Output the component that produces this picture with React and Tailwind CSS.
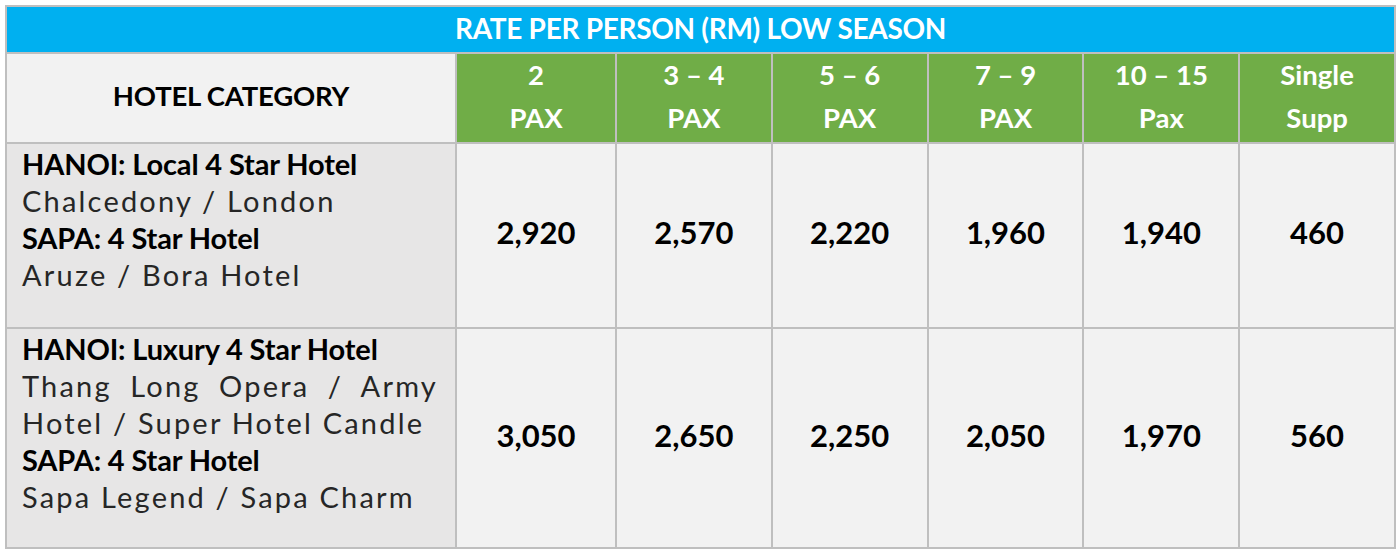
const cols = [
  ["2", "PAX"],
  ["3 – 4", "PAX"],
  ["5 – 6", "PAX"],
  ["7 – 9", "PAX"],
  ["10 – 15", "Pax"],
  ["Single", "Supp"],
];

const rows = [
  {
    h: "h-[183px]",
    lines: [
      { b: true, t: "HANOI: Local 4 Star Hotel" },
      { t: "Chalcedony / London" },
      { b: true, t: "SAPA: 4 Star Hotel" },
      { t: "Aruze / Bora Hotel" },
    ],
    prices: ["2,920", "2,570", "2,220", "1,960", "1,940", "460"],
  },
  {
    h: "h-[218px]",
    lines: [
      { b: true, t: "HANOI: Luxury 4 Star Hotel" },
      { t: "Thang Long Opera / Army", j: true },
      { t: "Hotel / Super Hotel Candle" },
      { b: true, t: "SAPA: 4 Star Hotel" },
      { t: "Sapa Legend / Sapa Charm" },
    ],
    prices: ["3,050", "2,650", "2,250", "2,050", "1,970", "560"],
  },
];

function CategoryCell({ h, lines }) {
  return (
    <div className={`${h} bg-[#e7e6e6] pl-[15px] pr-[17px] pt-[1px] text-black`}>
      {lines.map((l, i) =>
        l.b ? (
          <div key={i} className="font-bold text-[29px] leading-[37px] tracking-[-0.15px]">
            {l.t}
          </div>
        ) : (
          <div
            key={i}
            className={`font-normal text-[29px] leading-[37px] tracking-[2.2px] text-[#262626] ${l.j ? "text-justify [text-align-last:justify]" : ""}`}
          >
            {l.t}
          </div>
        )
      )}
    </div>
  );
}

export default function App() {
  return (
    <div className="min-h-screen bg-white pl-[5px] pt-[5px] font-['Lato',sans-serif]">
      <div className="w-[1391px] bg-[#bfbfbf] p-[2px] grid grid-cols-[448px_158px_repeat(5,1fr)] gap-[2px]">
        <div className="col-span-7 h-[45px] pb-[4px] bg-[#00b0f0] flex items-center justify-center text-white font-bold text-[28px] tracking-[-0.3px]">
          RATE PER PERSON (RM) LOW SEASON
        </div>

        <div className="h-[88px] pb-[4px] bg-[#f2f2f2] flex items-center justify-center font-bold text-[27.5px] text-black tracking-[-0.2px]">
          HOTEL CATEGORY
        </div>
        {cols.map(([a, b]) => (
          <div
            key={a}
            className="h-[88px] pb-[4px] bg-[#70ad47] flex flex-col items-center justify-center text-white font-bold text-[27.5px] leading-[43px]"
          >
            <span>{a}</span>
            <span>{b}</span>
          </div>
        ))}

        {rows.map((r, ri) => (
          <div key={ri} className="contents">
            <CategoryCell h={r.h} lines={r.lines} />
            {r.prices.map((p, pi) => (
              <div
                key={pi}
                className={`${r.h} pb-[6px] bg-[#f2f2f2] flex items-center justify-center font-bold text-[31px] text-black`}
              >
                {p}
              </div>
            ))}
          </div>
        ))}
      </div>
    </div>
  );
}
